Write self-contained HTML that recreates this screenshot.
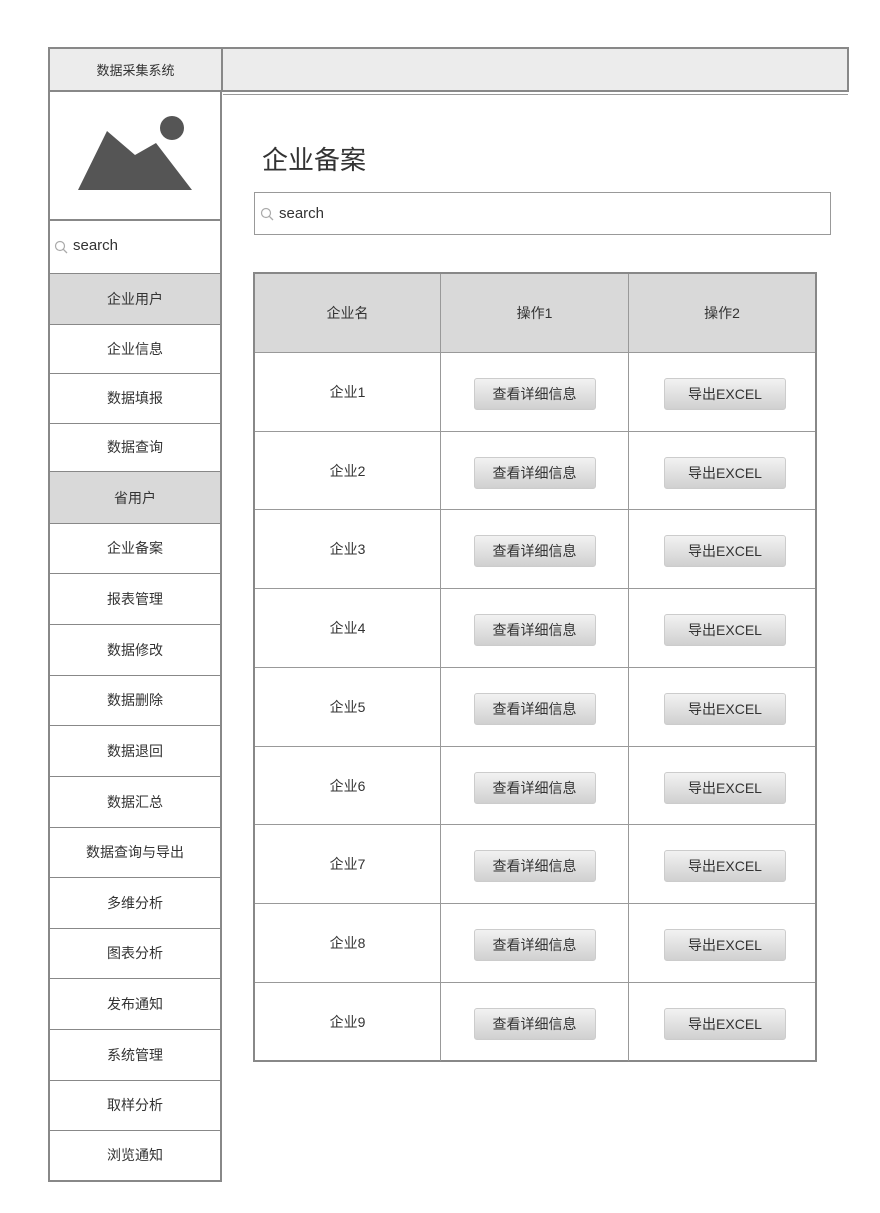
<!DOCTYPE html><html><head><meta charset="utf-8"><style>
body{margin:0;width:880px;height:1213px;background:#fff;position:relative;font-family:"Liberation Sans","Noto Sans CJK SC",sans-serif;color:#333;font-size:14px;overflow:hidden}
.a{position:absolute;box-sizing:border-box}
.c{display:flex;align-items:center;justify-content:center}
.nav{left:48px;width:174px;border-left:2px solid #888;border-right:2px solid #888;border-bottom:1px solid #888}
.g{background:#d9d9d9}
.btn{width:120px;height:30px;border-radius:3px;background:linear-gradient(#f2f2f2,#d0d0d0);border:1px solid #ccc;font-size:14px;color:#333;margin-top:4px}
.cell{border-right:1px solid #999;border-bottom:1px solid #999}
</style></head><body>
<div class="a c" style="left:48px;top:47px;width:175px;height:45px;background:#ececec;border:2px solid #888;font-size:13px">数据采集系统</div>
<div class="a" style="left:221px;top:47px;width:628px;height:45px;background:#ececec;border:2px solid #888"></div>
<div class="a" style="left:223px;top:94px;width:625px;height:1px;background:#999"></div>
<div class="a nav" style="top:91px;height:130px;border-bottom:2px solid #888">
<svg width="170" height="128" style="position:absolute;left:0;top:0"><polygon points="28,99 57,40 85,64 106,52 142,99" fill="#555"/><circle cx="122" cy="37" r="12" fill="#555"/></svg></div>
<div class="a nav" style="top:220px;height:55px;border-bottom:2px solid #888">
<svg width="14" height="14" style="position:absolute;left:4px;top:20px"><circle cx="6" cy="6" r="4.5" fill="none" stroke="#aaa" stroke-width="1.2"/><line x1="9.3" y1="9.3" x2="13" y2="13" stroke="#aaa" stroke-width="1.3"/></svg>
<span style="position:absolute;left:23px;top:17px;font-size:15px">search</span></div>
<div class="a nav c g" style="top:274px;height:51px">企业用户</div>
<div class="a nav c" style="top:324px;height:50px">企业信息</div>
<div class="a nav c" style="top:373px;height:51px">数据填报</div>
<div class="a nav c" style="top:423px;height:50px;border-bottom:2px solid #888">数据查询</div>
<div class="a nav c g" style="top:472px;height:52px">省用户</div>
<div class="a nav c" style="top:523px;height:51px">企业备案</div>
<div class="a nav c" style="top:573px;height:52px">报表管理</div>
<div class="a nav c" style="top:624px;height:52px">数据修改</div>
<div class="a nav c" style="top:675px;height:51px">数据删除</div>
<div class="a nav c" style="top:725px;height:52px">数据退回</div>
<div class="a nav c" style="top:776px;height:52px">数据汇总</div>
<div class="a nav c" style="top:827px;height:51px">数据查询与导出</div>
<div class="a nav c" style="top:877px;height:52px">多维分析</div>
<div class="a nav c" style="top:928px;height:51px">图表分析</div>
<div class="a nav c" style="top:978px;height:52px">发布通知</div>
<div class="a nav c" style="top:1029px;height:52px">系统管理</div>
<div class="a nav c" style="top:1080px;height:51px">取样分析</div>
<div class="a nav c" style="top:1130px;height:52px;border-bottom:2px solid #888">浏览通知</div>
<div class="a" style="left:262px;top:140px;font-size:26px;color:#333">企业备案</div>
<div class="a" style="left:254px;top:192px;width:577px;height:43px;border:1px solid #999">
<svg width="14" height="14" style="position:absolute;left:5px;top:14px"><circle cx="6" cy="6" r="4.5" fill="none" stroke="#aaa" stroke-width="1.2"/><line x1="9.3" y1="9.3" x2="13" y2="13" stroke="#aaa" stroke-width="1.3"/></svg>
<span style="position:absolute;left:24px;top:12px;font-size:15px">search</span></div>
<div class="a" style="left:253px;top:272px;width:564px;height:790px;border:2px solid #888"></div>
<div id="t"></div>
<script>
var ys=[274,353,432,510,589,668,747,825,904,983,1061],xs=[255,441,629,815],h='';
for(var r=0;r<10;r++){var y=ys[r],hh=ys[r+1]-y;for(var c=0;c<3;c++){var x=xs[c],w=xs[c+1]-x;
var txt=r==0?['企业名','操作1','操作2'][c]:(c==0?'企业'+r:(c==1?'<div class="btn c">查看详细信息</div>':'<div class="btn c" style="margin-left:6px">导出EXCEL</div>'));
h+='<div class="a c cell'+(r==0?' g':'')+'" style="left:'+x+'px;top:'+y+'px;width:'+w+'px;height:'+hh+'px;'+(c==2?'border-right:none;':'')+(r==9?'border-bottom:none;':'')+'">'+txt+'</div>';}}
document.getElementById('t').innerHTML=h;
</script>
</body></html>
